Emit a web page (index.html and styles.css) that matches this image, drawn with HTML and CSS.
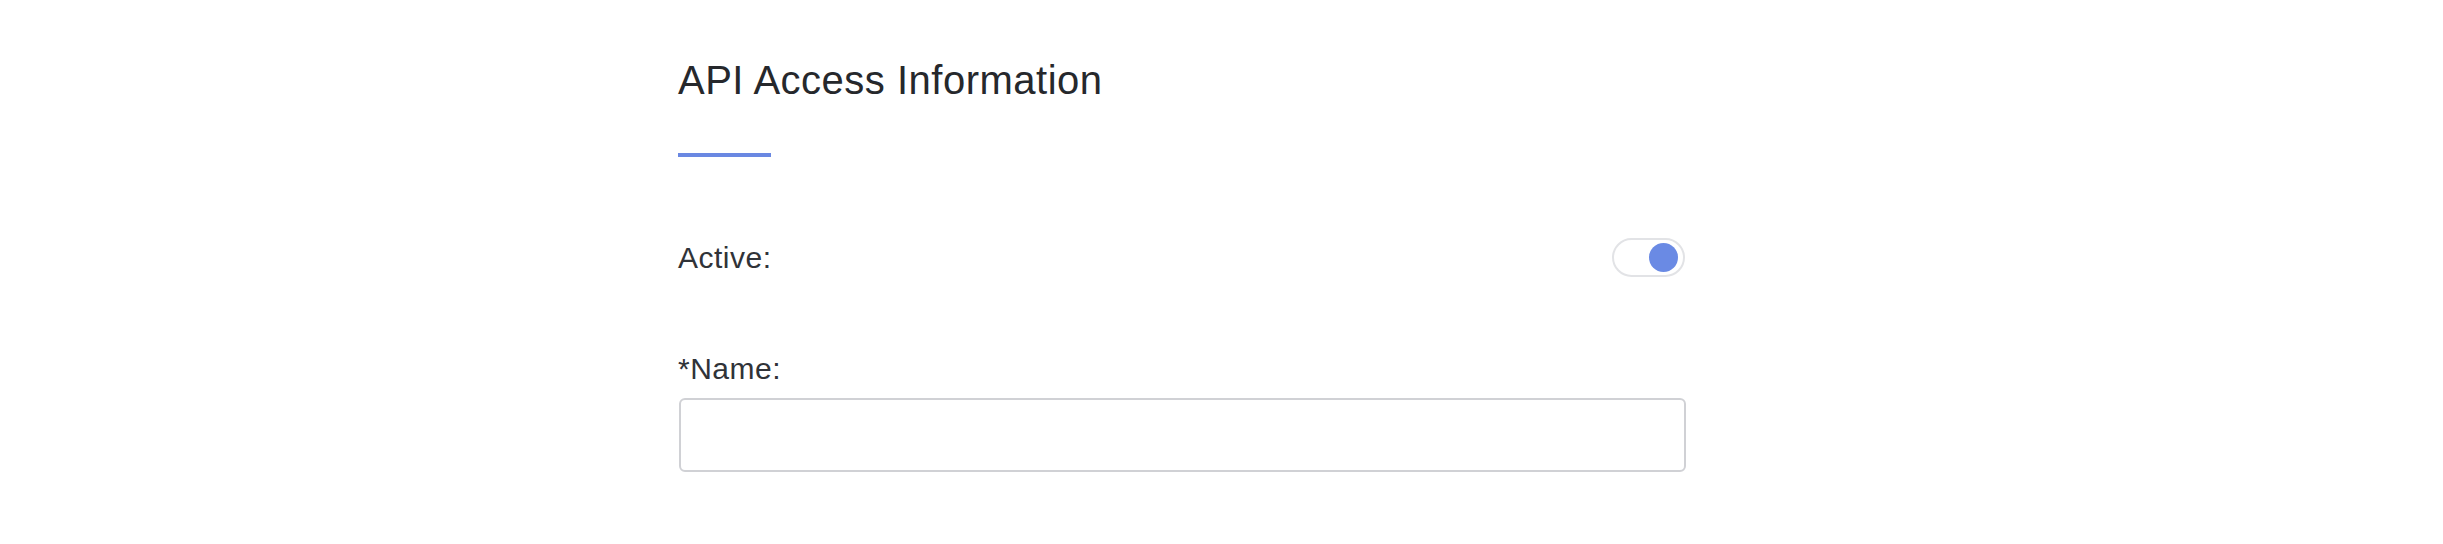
FILE: index.html
```html
<!DOCTYPE html>
<html>
<head>
<meta charset="utf-8">
<link rel="stylesheet" href="styles.css">
</head>
<body>
<div class="page">
  <section class="panel">
    <h1 class="title">API Access Information</h1>
    <div class="accent"></div>
    <div class="row-active">
      <span class="label">Active:</span>
      <span class="toggle"><span class="knob"></span></span>
    </div>
    <div class="field">
      <label class="label">*Name:</label>
      <input class="input" type="text">
    </div>
  </section>
</div>
</body>
</html>
```

FILE: styles.css
```css
html, body {
  margin: 0;
  padding: 0;
  background: #ffffff;
}
body {
  font-family: "Liberation Sans", Arial, sans-serif;
  color: #2b2d31;
}
.page {
  padding-left: 678px;
  padding-top: 57px;
}
.panel {
  width: 1008px;
  display: flex;
  flex-direction: column;
}
.title {
  margin: 0;
  font-size: 40px;
  line-height: 46px;
  font-weight: 400;
  letter-spacing: 0.5px;
  color: #26282c;
}
.accent {
  margin-top: 50px;
  width: 93px;
  height: 4px;
  background: #6a88e2;
}
.row-active {
  margin-top: 81px;
  display: flex;
  align-items: center;
  justify-content: space-between;
  height: 39px;
}
.label {
  font-size: 30px;
  line-height: 36px;
  letter-spacing: 0.5px;
  color: #303338;
}
.toggle {
  box-sizing: border-box;
  width: 73px;
  height: 39px;
  border: 2px solid #e2e3e6;
  border-radius: 20px;
  display: flex;
  align-items: center;
  justify-content: flex-end;
  padding-right: 5px;
  margin-right: 1px;
}
.knob {
  width: 29px;
  height: 29px;
  border-radius: 50%;
  background: #6a8ae4;
}
.field {
  margin-top: 74px;
  display: flex;
  flex-direction: column;
  gap: 11px;
}
.input {
  box-sizing: border-box;
  width: 1007px;
  height: 74px;
  margin: 0 0 0 1px;
  border: 2px solid #d0d1d5;
  border-radius: 6px;
  background: #ffffff;
  outline: none;
  font-size: 28px;
}
```
